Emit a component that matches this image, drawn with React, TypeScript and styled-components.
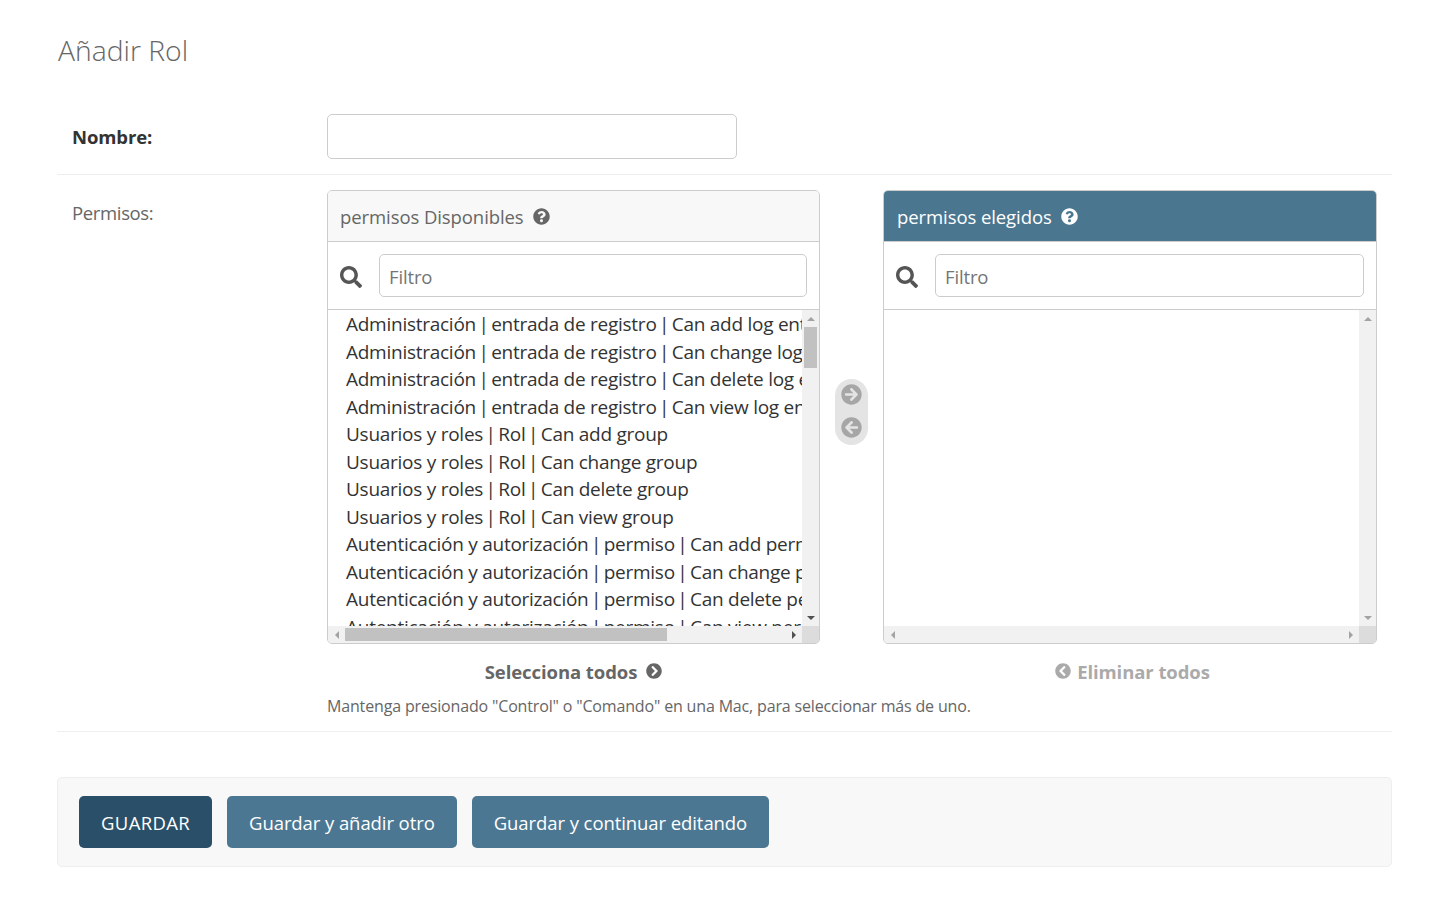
import styled, { createGlobalStyle } from "styled-components";
import {
    FaArrowCircleLeft,
    FaArrowCircleRight,
    FaChevronCircleLeft,
    FaChevronCircleRight,
    FaQuestionCircle,
    FaSearch,
} from "react-icons/fa";

const PermisosDisponibles = [
    "Administración | entrada de registro | Can add log entry",
    "Administración | entrada de registro | Can change log entry",
    "Administración | entrada de registro | Can delete log entry",
    "Administración | entrada de registro | Can view log entry",
    "Usuarios y roles | Rol | Can add group",
    "Usuarios y roles | Rol | Can change group",
    "Usuarios y roles | Rol | Can delete group",
    "Usuarios y roles | Rol | Can view group",
    "Autenticación y autorización | permiso | Can add permission",
    "Autenticación y autorización | permiso | Can change permission",
    "Autenticación y autorización | permiso | Can delete permission",
    "Autenticación y autorización | permiso | Can view permission",
];

const GlobalStyle = createGlobalStyle`
    html, body {
        margin: 0;
        background: #fff;
        color: #333;
        font-family: "Open Sans", "Noto Sans", "Liberation Sans", sans-serif;
    }
`;

const Page = styled.div`
    padding: 0 57px;
    height: 915px;
    box-sizing: border-box;
    overflow: hidden;
`;

const Title = styled.h1`
    margin: 0;
    padding: 29px 0 0 1px;
    height: 99px;
    box-sizing: border-box;
    font-size: 28.3px;
    line-height: 42px;
    font-weight: 300;
    color: #666;
`;

const FormRow = styled.div`
    display: grid;
    grid-template-columns: 270px 1fr;
    padding: 15px 0;
    border-bottom: 1px solid #eee;
`;

const Label = styled.label<{ $required?: boolean }>`
    padding-left: 15px;
    font-size: 18.5px;
    letter-spacing: ${({ $required }) => ($required ? "-0.1px" : "-0.35px")};
    line-height: 45px;
    font-weight: ${({ $required }) => ($required ? 700 : 400)};
    color: ${({ $required }) => ($required ? "#333" : "#666")};
`;

const PermisosLabel = styled(Label)`
    line-height: 46px;
`;

const TextInput = styled.input`
    display: block;
    width: 410px;
    height: 45px;
    box-sizing: border-box;
    border: 1px solid #ccc;
    border-radius: 5px;
    background: #fff;
`;

const Selector = styled.div`
    display: grid;
    grid-template-columns: 493px 33px 494px;
    column-gap: 15px;
    width: 1050px;
`;

const Column = styled.div`
    display: flex;
    flex-direction: column;
`;

const Box = styled.div`
    display: flex;
    flex-direction: column;
    height: 454px;
    box-sizing: border-box;
    border: 1px solid #ccc;
    border-radius: 5px;
    overflow: hidden;
`;

const BoxTitle = styled.div<{ $chosen?: boolean }>`
    display: flex;
    align-items: center;
    gap: 9px;
    flex: none;
    height: 51px;
    padding: 1px 12px 0 ${({ $chosen }) => ($chosen ? "13px" : "12px")};
    box-sizing: border-box;
    font-size: 18.5px;
    letter-spacing: -0.08px;
    background: ${({ $chosen }) => ($chosen ? "#4a7690" : "#f8f8f8")};
    color: ${({ $chosen }) => ($chosen ? "#fff" : "#666")};
    border-bottom: 1px solid #ccc;
`;

const FilterRow = styled.div`
    display: flex;
    align-items: center;
    flex: none;
    height: 68px;
    padding: 0 12px;
    gap: 17px;
    box-sizing: border-box;
    border-bottom: 1px solid #ccc;
    color: #555;
`;

const SearchIcon = styled(FaSearch)`
    flex: none;
    margin-top: 2px;
`;

const FilterInput = styled.input`
    flex: 1;
    min-width: 0;
    height: 43px;
    padding: 2px 9px 0;
    box-sizing: border-box;
    border: 1px solid #ccc;
    border-radius: 5px;
    font: inherit;
    font-size: 18.5px;
    letter-spacing: -0.15px;
    color: #666;
    &::placeholder {
        color: #757575;
        opacity: 1;
    }
`;

const ListArea = styled.div`
    flex: 1;
    min-height: 0;
    display: grid;
    grid-template-columns: 1fr 17px;
    grid-template-rows: 1fr 17px;
`;

const ListItems = styled.div`
    overflow: hidden;
    padding: 1px 0 0 18px;
    min-width: 0;
`;

const ListItem = styled.div`
    height: 27.5px;
    line-height: 27.5px;
    font-size: 19px;
    letter-spacing: -0.26px;
    white-space: nowrap;
    color: #333;
`;

const Pipe = styled.span`
    margin: 0 -2.2px;
`;

const ScrollTrack = styled.div<{ $horizontal?: boolean }>`
    display: flex;
    flex-direction: ${({ $horizontal }) => ($horizontal ? "row" : "column")};
    align-items: center;
    justify-content: space-between;
    background: #f1f1f1;
`;

const ScrollButton = styled.div<{ $dir: "up" | "down" | "left" | "right"; $dark?: boolean }>`
    flex: none;
    width: 17px;
    height: 17px;
    position: relative;
    &::after {
        content: "";
        position: absolute;
        left: 50%;
        top: 50%;
        transform: translate(-50%, -50%);
        border-style: solid;
        border-color: transparent;
        border-width: 4px;
        ${({ $dir, $dark }) => {
            const colour = $dark ? "#505050" : "#a3a3a3";
            if ($dir === "up") return `border-top-width: 0; border-bottom-color: ${colour};`;
            if ($dir === "down") return `border-bottom-width: 0; border-top-color: ${colour};`;
            if ($dir === "left") return `border-left-width: 0; border-right-color: ${colour};`;
            return `border-right-width: 0; border-left-color: ${colour};`;
        }}
    }
`;

const ScrollSpace = styled.div`
    flex: 1;
    align-self: stretch;
    display: flex;
    min-width: 0;
    min-height: 0;
`;

const VerticalThumb = styled.div`
    width: 13px;
    height: 41px;
    margin: 0 auto;
    background: #c1c1c1;
`;

const HorizontalThumb = styled.div`
    width: 322px;
    height: 13px;
    margin: auto 0;
    background: #c1c1c1;
`;

const ScrollCorner = styled.div`
    background: #dcdcdc;
`;

const Mover = styled.div`
    align-self: start;
    margin-top: 189px;
    height: 66px;
    padding-bottom: 2px;
    box-sizing: border-box;
    border-radius: 17px;
    background: #e4e4e4;
    display: flex;
    flex-direction: column;
    align-items: center;
    justify-content: center;
    gap: 12px;
    color: #a6a6a6;
`;

const BulkLink = styled.div<{ $muted?: boolean }>`
    display: flex;
    align-items: center;
    justify-content: center;
    gap: ${({ $muted }) => ($muted ? "6px" : "9px")};
    height: 52px;
    padding: 2px 0 0 ${({ $muted }) => ($muted ? "5px" : "0")};
    box-sizing: border-box;
    font-size: 18.5px;
    letter-spacing: -0.08px;
    font-weight: 700;
    color: ${({ $muted }) => ($muted ? "#aaa" : "#666")};
`;

const Help = styled.div`
    margin-bottom: -1px;
    font-size: 16px;
    letter-spacing: -0.16px;
    line-height: 21px;
    color: #666;
`;

const SubmitRow = styled.div`
    display: flex;
    gap: 15px;
    margin-top: 45px;
    padding: 18px 21px;
    height: 90px;
    box-sizing: border-box;
    background: #f8f8f8;
    border: 1px solid #eee;
    border-radius: 5px;
`;

const SaveButton = styled.button<{ $primary?: boolean }>`
    height: 52px;
    padding: 0 22px;
    border: 0;
    border-radius: 5px;
    font: inherit;
    font-size: 18.5px;
    letter-spacing: ${({ $primary }) => ($primary ? "0.35px" : "-0.08px")};
    color: #fff;
    background: ${({ $primary }) => ($primary ? "#2a5069" : "#4c7792")};
`;

const ScrollBars = ({ filled }: { filled?: boolean }) => (
    <>
        <ScrollTrack>
            <ScrollButton $dir="up" />
            <ScrollSpace>{filled && <VerticalThumb />}</ScrollSpace>
            <ScrollButton $dir="down" $dark={filled} />
        </ScrollTrack>
        <ScrollTrack $horizontal>
            <ScrollButton $dir="left" />
            <ScrollSpace>{filled && <HorizontalThumb />}</ScrollSpace>
            <ScrollButton $dir="right" $dark={filled} />
        </ScrollTrack>
        <ScrollCorner />
    </>
);

const App = () => {
    return (
        <Page>
            <GlobalStyle />
            <Title>Añadir Rol</Title>

            <FormRow>
                <Label $required>Nombre:</Label>
                <TextInput />
            </FormRow>

            <FormRow>
                <PermisosLabel as="div">Permisos:</PermisosLabel>
                <div>
                    <Selector>
                        <Column>
                            <Box>
                                <BoxTitle>
                                    permisos Disponibles
                                    <FaQuestionCircle size={17} color="#666" />
                                </BoxTitle>
                                <FilterRow>
                                    <SearchIcon size={22} />
                                    <FilterInput placeholder="Filtro" />
                                </FilterRow>
                                <ListArea>
                                    <ListItems>
                                        {PermisosDisponibles.map((item) => {
                                            const [app, model, name] = item.split(" | ");
                                            return (
                                                <ListItem key={item}>
                                                    {app} <Pipe>|</Pipe> {model} <Pipe>|</Pipe> {name}
                                                </ListItem>
                                            );
                                        })}
                                    </ListItems>
                                    <ScrollBars filled />
                                </ListArea>
                            </Box>
                            <BulkLink>
                                Selecciona todos
                                <FaChevronCircleRight size={16} />
                            </BulkLink>
                        </Column>

                        <Mover>
                            <FaArrowCircleRight size={21} />
                            <FaArrowCircleLeft size={21} />
                        </Mover>

                        <Column>
                            <Box>
                                <BoxTitle $chosen>
                                    permisos elegidos
                                    <FaQuestionCircle size={17} color="#fff" />
                                </BoxTitle>
                                <FilterRow>
                                    <SearchIcon size={22} />
                                    <FilterInput placeholder="Filtro" />
                                </FilterRow>
                                <ListArea>
                                    <ListItems />
                                    <ScrollBars />
                                </ListArea>
                            </Box>
                            <BulkLink $muted>
                                <FaChevronCircleLeft size={16} />
                                Eliminar todos
                            </BulkLink>
                        </Column>
                    </Selector>
                    <Help>
                        Mantenga presionado "Control" o "Comando" en una Mac, para seleccionar más de uno.
                    </Help>
                </div>
            </FormRow>

            <SubmitRow>
                <SaveButton $primary>GUARDAR</SaveButton>
                <SaveButton>Guardar y añadir otro</SaveButton>
                <SaveButton>Guardar y continuar editando</SaveButton>
            </SubmitRow>
        </Page>
    );
};

export default App;
